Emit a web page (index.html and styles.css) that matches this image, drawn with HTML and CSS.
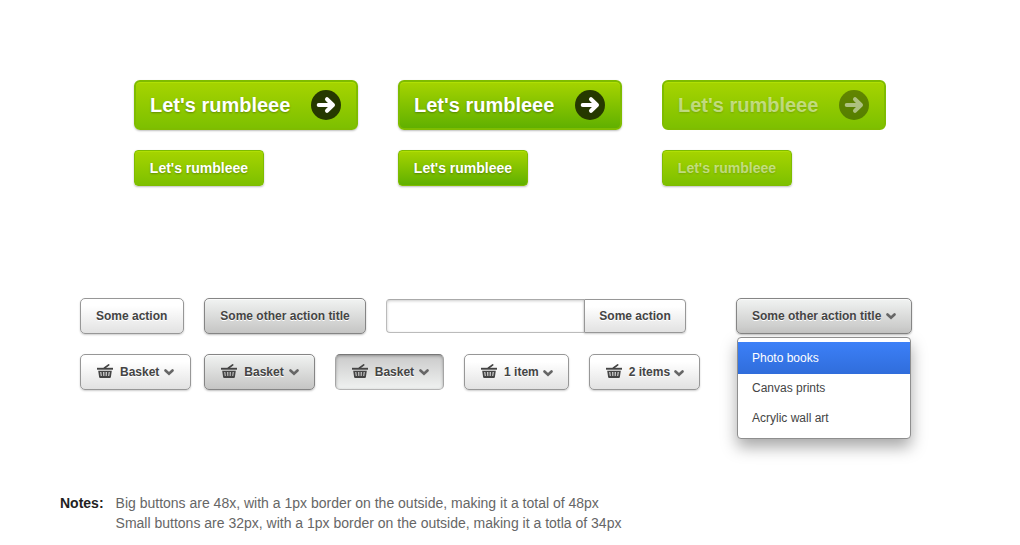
FILE: index.html
```html
<!DOCTYPE html>
<html lang="en">
<head>
<meta charset="utf-8">
<meta name="viewport" content="width=device-width, initial-scale=1">
<title>Buttons</title>
<link rel="stylesheet" href="styles.css">
</head>
<body>
<svg class="sprite" aria-hidden="true">
  <symbol id="arrow" viewBox="0 0 30 30">
    <circle class="arrow-disc" cx="15" cy="15" r="15"/>
    <path class="arrow-line" d="M7.700 15h14M16 9.200l6 5.800-6 5.800"/>
  </symbol>
  <symbol id="basket" viewBox="0 0 16 14">
    <path d="M7.500 4L11.700.900" fill="none" stroke="currentColor" stroke-width="1.700" stroke-linecap="round"/>
    <path d="M0 3.800h16v1.900H0z" fill="currentColor"/>
    <path fill-rule="evenodd" d="M1.200 6.700h13.600l-.9 6.300q-.2 1-1 1H3.100q-.8 0-1-1zM3.300 8l.5 4h.9L4.300 8zM6.200 8l.2 4h.9V8zM8.700 8v4h.9L9.800 8zM11.700 8l-.4 4h.9L12.700 8z" fill="currentColor"/>
  </symbol>
  <symbol id="chevron" viewBox="0 0 10 7">
    <path d="M1.500 1.500L5 4.800l3.500-3.300" fill="none" stroke="currentColor" stroke-width="2.600" stroke-linecap="round" stroke-linejoin="miter"/>
  </symbol>
</svg>
<main class="page">
  <section class="primary-grid">
    <button class="primary primary-big">Let's rumbleee <svg class="arrow"><use href="#arrow"/></svg></button>
    <button class="primary primary-big is-hover">Let's rumbleee <svg class="arrow"><use href="#arrow"/></svg></button>
    <button class="primary primary-big" disabled>Let's rumbleee <svg class="arrow"><use href="#arrow"/></svg></button>
    <button class="primary">Let's rumbleee</button>
    <button class="primary is-hover">Let's rumbleee</button>
    <button class="primary" disabled>Let's rumbleee</button>
  </section>

  <section class="secondary">
    <div class="rows">
      <div class="row">
        <button class="plain">Some action</button>
        <button class="plain is-hover">Some other action title</button>
        <form class="field">
          <input class="field-input" type="text" aria-label="Value">
          <button class="plain field-button" type="button">Some action</button>
        </form>
      </div>
      <div class="row">
        <div class="pair">
          <button class="plain"><svg class="basket"><use href="#basket"/></svg>Basket<svg class="chevron"><use href="#chevron"/></svg></button>
          <button class="plain is-hover"><svg class="basket"><use href="#basket"/></svg>Basket<svg class="chevron"><use href="#chevron"/></svg></button>
        </div>
        <button class="plain is-pressed"><svg class="basket"><use href="#basket"/></svg>Basket<svg class="chevron"><use href="#chevron"/></svg></button>
        <button class="plain is-count"><svg class="basket"><use href="#basket"/></svg>1 item<svg class="chevron"><use href="#chevron"/></svg></button>
        <button class="plain is-count"><svg class="basket"><use href="#basket"/></svg>2 items<svg class="chevron"><use href="#chevron"/></svg></button>
      </div>
    </div>
    <div class="dropdown">
      <button class="plain is-hover" aria-haspopup="true" aria-expanded="true">Some other action title<svg class="chevron"><use href="#chevron"/></svg></button>
      <ul class="menu">
        <li><a class="menu-item is-active" href="#photo-books">Photo books</a></li>
        <li><a class="menu-item" href="#canvas-prints">Canvas prints</a></li>
        <li><a class="menu-item" href="#acrylic-wall-art">Acrylic wall art</a></li>
      </ul>
    </div>
  </section>

  <section class="notes">
    <strong class="notes-title">Notes:</strong>
    <div>
      <p>Big buttons are 48x, with a 1px border on the outside, making it a total of 48px</p>
      <p>Small buttons are 32px, with a 1px border on the outside, making it a totla of 34px</p>
    </div>
  </section>
</main>
</body>
</html>
```
FILE: styles.css
```css
* {
  box-sizing: border-box;
}

body {
  margin: 0;
  background: #fff;
  color: #666;
  font: 14px/20px "Liberation Sans", Arial, sans-serif;
}

p,
ul {
  margin: 0;
  padding: 0;
}

button {
  font-family: inherit;
  font-weight: bold;
  white-space: nowrap;
  cursor: pointer;
}

svg {
  flex: none;
}

.sprite {
  position: absolute;
  width: 0;
  height: 0;
}

.page {
  padding: 80px 60px 12px;
}

/* Green buttons */

.primary-grid {
  display: grid;
  grid-template-columns: repeat(3, max-content);
  gap: 20px 40px;
  justify-items: start;
  padding-left: 74px;
}

.primary {
  min-width: 130px;
  height: 36px;
  padding: 0 14px;
  border: 1px solid #7fbc00;
  border-radius: 4px;
  background: linear-gradient(#a6d400, #7dc000);
  box-shadow: inset 0 1px #b0df05, 0 1px 2px rgba(0, 0, 0, 0.25);
  color: #fff;
  font-size: 14px;
  text-shadow: 0 1px 2px rgba(0, 0, 0, 0.3);
}

.primary-big {
  display: flex;
  align-items: center;
  justify-content: space-between;
  gap: 20px;
  min-width: 224px;
  height: 50px;
  padding: 0 15px 0 14px;
  border-width: 2px;
  border-radius: 6px;
  font-size: 20px;
}

.primary.is-hover {
  background: linear-gradient(#a6d400, #60b000);
}

.primary:disabled {
  color: rgba(255, 255, 255, 0.5);
  text-shadow: 0 1px 2px rgba(0, 0, 0, 0.15);
}

.primary-big:disabled {
  box-shadow: inset 0 1px #b0df05;
}

.arrow {
  width: 30px;
  height: 30px;
}

.arrow-disc {
  fill: #263900;
}

.arrow-line {
  fill: none;
  stroke: currentColor;
  stroke-width: 4;
  stroke-linecap: round;
  stroke-linejoin: round;
}

.primary:disabled .arrow {
  fill-opacity: 0.5;
}

/* Grey buttons */

.secondary {
  display: flex;
  gap: 50px;
  margin-top: 112px;
  padding-left: 20px;
}

.rows {
  display: flex;
  flex-direction: column;
  gap: 20px;
  width: 606px;
}

.row {
  display: flex;
  align-items: center;
  gap: 20px;
}

.pair {
  display: flex;
  gap: 13px;
}

.plain {
  display: flex;
  align-items: center;
  height: 36px;
  padding: 0 15px;
  border: 1px solid #979797;
  border-radius: 5px;
  background: linear-gradient(#fff 20%, #e2e2e2);
  box-shadow: 0 1px 2px rgba(0, 0, 0, 0.2);
  color: #444;
  font-size: 12px;
  text-shadow: 0 1px #fff;
}

.row:first-child > .plain:first-child,
.pair > .plain:first-child {
  padding-right: 16px;
}

.plain.is-hover {
  border-color: #858585;
  background: linear-gradient(#f1f3f2, #c5c5c4);
  box-shadow: inset 0 1px #fafafa, 0 1px 2px rgba(0, 0, 0, 0.25);
}

.plain.is-pressed {
  padding-right: 14px;
  border-color: #777 #a5a5a5 #b5b5b5;
  background: linear-gradient(#cacaca, #f0f2f1);
  box-shadow: inset 0 1px 3px rgba(0, 0, 0, 0.3);
}

.basket {
  width: 16px;
  height: 14px;
  margin: 0 7px 2px 1px;
}

.chevron {
  width: 10px;
  height: 7px;
  margin: 1px 0 0 5px;
  color: #666;
}

.is-count .chevron {
  margin: 2px 0 0 4px;
}

.field {
  display: flex;
  width: 300px;
}

.field-input {
  flex: 1;
  min-width: 0;
  height: 34px;
  padding: 0 10px;
  border: 1px solid #bbb;
  border-top-color: #aaa;
  border-right: 0;
  border-radius: 4px 0 0 4px;
  box-shadow: inset 0 1px 3px rgba(0, 0, 0, 0.2);
  color: #444;
  font: inherit;
}

.field-button {
  height: 34px;
  padding: 0 14px;
  border-radius: 0 4px 4px 0;
}

/* Dropdown */

.dropdown {
  position: relative;
}

.menu {
  position: absolute;
  top: 39px;
  left: 1px;
  right: 1px;
  padding: 4px 0 5px;
  border: 1px solid #8e8e8e;
  border-radius: 4px;
  background: #fff;
  box-shadow: 0 8px 16px rgba(0, 0, 0, 0.35);
  list-style: none;
}

.menu-item {
  display: block;
  padding: 0 14px;
  color: #444;
  font-size: 12px;
  line-height: 30px;
  text-decoration: none;
}

.menu-item.is-active {
  margin-bottom: -1px;
  background: linear-gradient(#3c80f8, #306ddb);
  color: #fff;
  line-height: 32px;
}

/* Notes */

.notes {
  display: flex;
  gap: 12px;
  margin-top: 103px;
}

.notes-title {
  color: #222;
}
```
